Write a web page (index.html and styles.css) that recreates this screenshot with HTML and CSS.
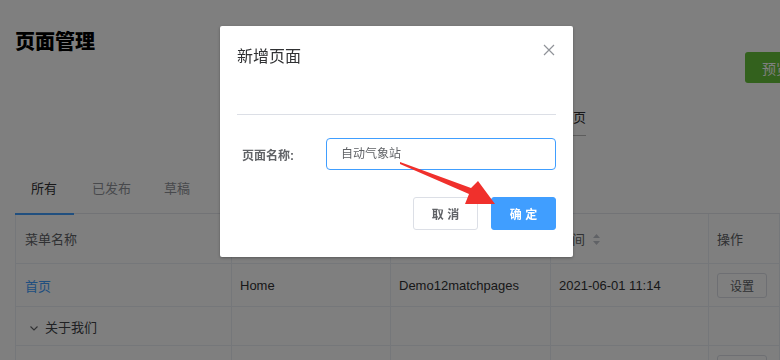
FILE: index.html
```html
<!DOCTYPE html>
<html lang="zh-CN">
<head>
    <meta charset="UTF-8">
    <title>页面管理</title>
    <link rel="stylesheet" href="styles.css">
</head>
<body>
    <div class="page">
        <div class="page-head">
            <h1>页面管理</h1>
            <button class="btn-preview">预览</button>
        </div>

        <div class="subnav">
            <span class="subnav-item">全部</span>
            <span class="subnav-item active">单页</span>
        </div>

        <div class="tabs">
            <span class="tab active">所有</span>
            <span class="tab">已发布</span>
            <span class="tab">草稿</span>
        </div>

        <table class="grid">
            <colgroup>
                <col style="width:216px">
                <col style="width:159px">
                <col style="width:160px">
                <col style="width:158px">
                <col>
            </colgroup>
            <thead>
                <tr>
                    <th>菜单名称</th>
                    <th>英文名称</th>
                    <th>页面模板</th>
                    <th>时间
                        <svg class="sort" width="7" height="11" viewBox="0 0 7 11">
                            <polygon points="3.5,0 7,4 0,4" fill="#c0c4cc"/>
                            <polygon points="0,7 7,7 3.5,11" fill="#c0c4cc"/>
                        </svg>
                    </th>
                    <th>操作</th>
                </tr>
            </thead>
            <tbody>
                <tr class="row-1">
                    <td><a class="link">首页</a></td>
                    <td>Home</td>
                    <td>Demo12matchpages</td>
                    <td>2021-06-01 11:14</td>
                    <td><button class="btn-small">设置</button></td>
                </tr>
                <tr class="row-2">
                    <td>
                        <svg class="chev" width="8" height="5" viewBox="0 0 8 5">
                            <path d="M0.5 0.5 L4 4 L7.5 0.5" stroke="#606266" stroke-width="1.1" fill="none"/>
                        </svg>关于我们
                    </td>
                    <td></td>
                    <td></td>
                    <td></td>
                    <td></td>
                </tr>
                <tr class="row-3">
                    <td></td>
                    <td></td>
                    <td></td>
                    <td></td>
                    <td><button class="btn-small">设置</button></td>
                </tr>
            </tbody>
        </table>
    </div>

    <div class="mask"></div>

    <div class="dialog">
        <div class="dialog-head">
            <span class="dialog-title">新增页面</span>
            <svg class="dialog-close" width="12" height="12" viewBox="0 0 12 12">
                <path d="M1 1 L11 11 M11 1 L1 11" stroke="#909399" stroke-width="1.2" fill="none"/>
            </svg>
        </div>
        <div class="dialog-body">
            <div class="form-item">
                <label class="form-label">页面名称:</label>
                <div class="form-input">自动气象站</div>
            </div>
        </div>
        <div class="dialog-foot">
            <button class="btn btn-default">取 消</button>
            <button class="btn btn-primary">确 定</button>
        </div>
    </div>

    <svg class="annot" width="780" height="360" viewBox="0 0 780 360">
        <polygon points="400,162 471,188 478,181 495,204 465,204 469,194 400,164" fill="#f0302c"/>
    </svg>
</body>
</html>
```

FILE: styles.css
```css
body {
    margin: 0;
    background: #fff;
    font-family: "Liberation Sans", "Noto Sans CJK SC", sans-serif;
    color: #303133;
    overflow: hidden;
}

.page {
    padding: 0 0 0 15px;
    width: 765px;
}

.page-head {
    display: flex;
    justify-content: space-between;
    align-items: flex-start;
    height: 88px;
    padding-top: 28px;
    box-sizing: border-box;
}

h1 {
    margin: 0;
    font-size: 20px;
    font-weight: 900;
    line-height: 28px;
    color: #000;
}

.btn-preview {
    margin-top: 24px;
    margin-right: -35px;
    width: 70px;
    height: 31px;
    border: none;
    border-radius: 3px;
    background: #67c23a;
    color: #fff;
    font-size: 14px;
    font-family: inherit;
    text-align: left;
    padding-left: 17px;
}

.subnav {
    display: flex;
    justify-content: flex-end;
    width: 571px;
    height: 48px;
    box-sizing: border-box;
}

.subnav-item {
    font-size: 13px;
    line-height: 16px;
    padding: 22px 0 10px 12px;
    color: #303133;
}

.subnav-item.active {
    border-bottom: 1px solid #bbb;
}

.tabs {
    display: flex;
    height: 40px;
    border-bottom: 1px solid #e4e7ed;
    box-sizing: border-box;
    margin-top: 38px;
}

.tab {
    font-size: 13px;
    line-height: 16px;
    padding: 7px 0 0;
    color: #909399;
    height: 32px;
    white-space: nowrap;
}

.tab.active {
    color: #303133;
    border-bottom: 2px solid #409eff;
    padding: 7px 17px 0 16px;
}

.tab:nth-child(2) {
    margin-left: 18px;
}

.tab:nth-child(3) {
    margin-left: 33px;
}

.grid {
    width: 765px;
    border-collapse: collapse;
    table-layout: fixed;
    font-size: 13px;
    border-left: 1px solid #ebeef5;
}

.grid th,
.grid td {
    border: 1px solid #ebeef5;
    border-left: none;
    text-align: left;
    padding: 0 8px;
    white-space: nowrap;
    overflow: hidden;
}

.grid th {
    height: 49px;
    font-weight: normal;
    color: #606266;
    border-top: none;
}

.grid th:first-child,
.grid td:first-child {
    padding-left: 9px;
}

.row-1 td {
    height: 42px;
    color: #303133;
}

.row-2 td {
    height: 38px;
    color: #404246;
}

.row-3 td {
    height: 38px;
    vertical-align: top;
}

.link {
    color: #409eff;
}

.chev {
    margin-left: 5px;
    margin-right: 7px;
    vertical-align: middle;
}

.sort {
    vertical-align: -1px;
    margin-left: 4px;
}

.btn-small {
    width: 50px;
    height: 25px;
    border: 1px solid #dcdfe6;
    border-radius: 3px;
    background: #fff;
    color: #606266;
    font-size: 12px;
    font-family: inherit;
    padding: 0;
}

.row-3 .btn-small {
    margin-top: 9px;
}

.mask {
    position: fixed;
    inset: 0;
    background: rgba(0, 0, 0, 0.5);
}

.dialog {
    position: absolute;
    left: 220px;
    top: 26px;
    width: 353px;
    height: 231px;
    background: #fff;
    border-radius: 2px;
    box-shadow: 0 1px 3px rgba(0, 0, 0, 0.3);
    box-sizing: border-box;
    padding: 0 17px 0 17px;
}

.dialog-head {
    display: flex;
    justify-content: space-between;
    align-items: center;
    height: 89px;
    padding-bottom: 10px;
    box-sizing: border-box;
    border-bottom: 1px solid #dcdfe6;
}

.dialog-title {
    font-size: 16px;
    color: #303133;
    padding-bottom: 21px;
}

.dialog-close {
    margin-right: 1px;
    margin-bottom: 31px;
}

.dialog-body {
    padding-top: 23px;
}

.form-item {
    display: flex;
    align-items: center;
}

.form-label {
    width: 89px;
    padding-left: 5px;
    box-sizing: border-box;
    font-size: 12px;
    font-weight: bold;
    color: #606266;
}

.form-input {
    flex: 1;
    height: 32px;
    border: 1px solid #409eff;
    border-radius: 4px;
    box-sizing: border-box;
    padding-left: 14px;
    line-height: 30px;
    font-size: 12px;
    color: #606266;
}

.dialog-foot {
    display: flex;
    justify-content: flex-end;
    gap: 13px;
    padding-top: 27px;
}

.btn {
    width: 65px;
    height: 33px;
    border-radius: 3px;
    font-size: 12px;
    font-weight: bold;
    font-family: inherit;
    padding: 0;
}

.btn-default {
    border: 1px solid #dcdfe6;
    background: #fff;
    color: #606266;
}

.btn-primary {
    border: 1px solid #409eff;
    background: #409eff;
    color: #fff;
}

.annot {
    position: absolute;
    left: 0;
    top: 0;
    pointer-events: none;
}
```
